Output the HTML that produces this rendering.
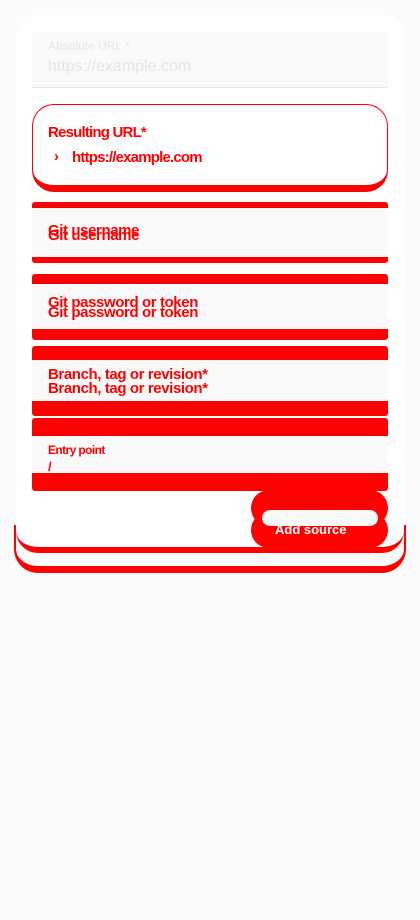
<!DOCTYPE html>
<html><head><style>
*{margin:0;padding:0;box-sizing:border-box}
body{width:420px;height:920px;background:#fcfcfc;position:relative;overflow:hidden;font-family:"Liberation Sans",sans-serif}
.a{position:absolute}
.r{background:#ff0000}
.t{position:absolute;color:#f00;font-weight:bold;font-size:15px;white-space:nowrap;letter-spacing:-0.4px}
</style></head><body>
<div class="a" style="left:14px;top:525px;width:392px;height:48px;border-radius:0 0 24px 24px;border-bottom:7px solid #f00;border-left:2px solid #f00;border-right:2px solid #f00;border-top:none"></div>
<div class="a" style="left:16px;top:15px;width:388px;height:538px;background:#fff;border-radius:22px;border-bottom:6px solid #f00"></div>

<div class="a" style="left:32px;top:32px;width:356px;height:56px;background:#fafafa;border-bottom:1px solid #e8e8e8;border-radius:4px 4px 0 0"></div>
<div class="a" style="left:48px;top:39px;font-size:12px;color:#e6e6e6">Absolute URL *</div>
<div class="a" style="left:48px;top:58px;font-size:16px;color:#e4e4e4">https://example.com</div>

<div class="a" style="left:32px;top:104px;width:356px;height:88px;border:1px solid #f00;border-bottom:7px solid #f00;border-radius:22px;background:#fff"></div>
<div class="t" style="left:48px;top:124px;font-size:15px;letter-spacing:-0.8px">Resulting URL*</div>
<div class="t" style="left:54px;top:148px;font-size:15px">›</div>
<div class="t" style="left:72px;top:149px;font-size:15px;letter-spacing:-0.8px">https://example.com</div>

<div class="a r" style="left:32px;top:202px;width:356px;height:61px;border-radius:3px"></div>
<div class="a" style="left:32px;top:208px;width:356px;height:49px;background:#fafafa"></div>
<div class="t" style="left:48px;top:222px">Git username</div>
<div class="t" style="left:48px;top:227px">Git username</div>

<div class="a r" style="left:32px;top:274px;width:356px;height:66px;border-radius:3px"></div>
<div class="a" style="left:32px;top:284px;width:356px;height:45px;background:#fafafa"></div>
<div class="t" style="left:48px;top:294px">Git password or token</div>
<div class="t" style="left:48px;top:304px">Git password or token</div>

<div class="a r" style="left:32px;top:346px;width:356px;height:70px;border-radius:3px"></div>
<div class="a" style="left:32px;top:360px;width:356px;height:41px;background:#fafafa"></div>
<div class="t" style="left:48px;top:366px">Branch, tag or revision*</div>
<div class="t" style="left:48px;top:380px">Branch, tag or revision*</div>

<div class="a r" style="left:32px;top:418px;width:356px;height:73px;border-radius:3px"></div>
<div class="a" style="left:32px;top:436px;width:356px;height:37px;background:#fafafa"></div>
<div class="t" style="left:48px;top:443px;font-size:12px;letter-spacing:-0.6px">Entry point</div>
<div class="t" style="left:48px;top:459px;font-size:13px">/</div>

<div class="a r" style="left:251px;top:490px;width:137px;height:36px;border-radius:18px"></div>
<div class="a r" style="left:251px;top:512px;width:137px;height:36px;border-radius:18px"></div>
<div class="a" style="left:262px;top:510px;width:116px;height:16px;background:#fafafa;border-radius:8px"></div>
<div class="a" style="left:275px;top:522px;color:#fff;font-weight:bold;font-size:13px">Add source</div>
</body></html>
